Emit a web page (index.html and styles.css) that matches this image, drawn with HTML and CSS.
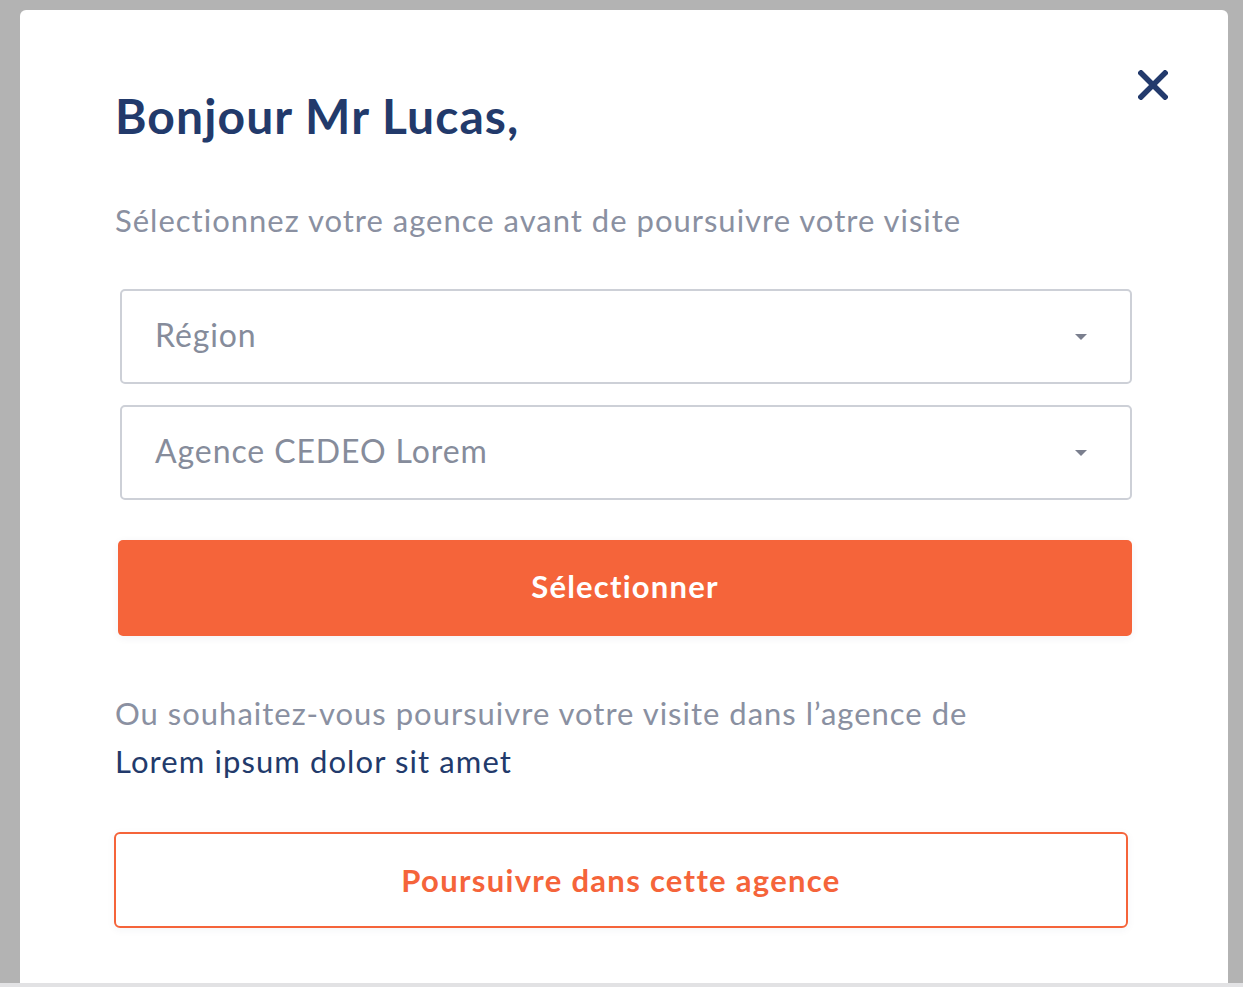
FILE: index.html
```html
<!DOCTYPE html>
<html lang="fr">
<head>
<meta charset="utf-8">
<title>Sélection agence</title>
<link rel="stylesheet" href="styles.css">
</head>
<body>
<div class="page">
  <div class="modal">
    <button class="close" aria-label="Fermer">
      <svg width="30" height="30" viewBox="0 0 30 30"><path d="M3 3 L27 27 M27 3 L3 27" stroke="#233a6c" stroke-width="5.5" stroke-linecap="square" fill="none"/></svg>
    </button>
    <h1 class="title">Bonjour Mr Lucas,</h1>
    <p class="subtitle">Sélectionnez votre agence avant de poursuivre votre visite</p>
    <div class="select select-first">
      <span class="select-label">Région</span>
      <span class="caret"></span>
    </div>
    <div class="select select-second">
      <span class="select-label">Agence CEDEO Lorem</span>
      <span class="caret"></span>
    </div>
    <button class="btn-primary">Sélectionner</button>
    <p class="alt-text">Ou souhaitez-vous poursuivre votre visite dans l’agence de<br><span class="alt-agency">Lorem ipsum dolor sit amet</span></p>
    <button class="btn-outline">Poursuivre dans cette agence</button>
  </div>
  <div class="bottom-strip"></div>
</div>
</body>
</html>
```
FILE: styles.css
```css
html, body {
  margin: 0;
  padding: 0;
}
body {
  background: #b3b3b3;
  font-family: "Lato", "Noto Sans", sans-serif;
  height: 987px;
  overflow: hidden;
}
.page {
  display: flex;
  flex-direction: column;
  height: 987px;
}
.modal {
  position: relative;
  margin: 10px 15px 0 20px;
  height: 973px;
  box-sizing: border-box;
  background: #fff;
  border-radius: 6px 6px 0 0;
  padding: 78px 0 0 95px;
}
.bottom-strip {
  height: 4px;
  background: #e2e2e4;
}
.close {
  position: absolute;
  top: 60px;
  right: 60px;
  width: 30px;
  height: 30px;
  padding: 0;
  border: 0;
  background: none;
}
.close svg { display: block; }
.title {
  margin: 0;
  font-size: 48px;
  line-height: 56px;
  font-weight: 700;
  color: #223a6b;
  letter-spacing: 1.1px;
}
.subtitle {
  margin: 56px 0 0 0;
  font-size: 31px;
  line-height: 40px;
  color: #8a90a1;
  letter-spacing: 1px;
}
.select {
  display: flex;
  align-items: center;
  justify-content: space-between;
  box-sizing: border-box;
  width: 1012px;
  height: 95px;
  margin-left: 5px;
  border: 2px solid #cdd0d7;
  border-radius: 5px;
  padding: 0 43px 5px 33px;
}
.select-first { margin-top: 49px; }
.select-second { margin-top: 21px; }
.select-label {
  font-size: 32px;
  color: #868c9b;
  letter-spacing: 0.9px;
}
.caret {
  width: 0;
  height: 0;
  margin-top: 5px;
  border-left: 6px solid transparent;
  border-right: 6px solid transparent;
  border-top: 6px solid #7a7f8e;
}
.btn-primary {
  display: block;
  margin: 40px 0 0 3px;
  width: 1014px;
  height: 96px;
  padding: 0 0 4px 0;
  border: 0;
  border-radius: 5px;
  background: #f5643a;
  color: #fff;
  font-family: inherit;
  font-size: 31px;
  font-weight: 700;
  letter-spacing: 1.2px;
  box-shadow: 0 2px 8px rgba(40, 50, 90, 0.06);
}
.alt-text {
  margin: 53px 0 0 0;
  font-size: 31px;
  line-height: 48px;
  color: #8a90a1;
  letter-spacing: 1px;
}
.alt-agency {
  color: #223a6b;
  letter-spacing: 1.1px;
}
.btn-outline {
  display: block;
  margin: 47px 0 0 -1px;
  width: 1014px;
  height: 96px;
  box-sizing: border-box;
  border: 2px solid #f5643a;
  border-radius: 6px;
  background: #fff;
  color: #f5643a;
  font-family: inherit;
  font-size: 31px;
  font-weight: 700;
  letter-spacing: 1.3px;
  box-shadow: 0 2px 8px rgba(40, 50, 90, 0.05);
}
```
